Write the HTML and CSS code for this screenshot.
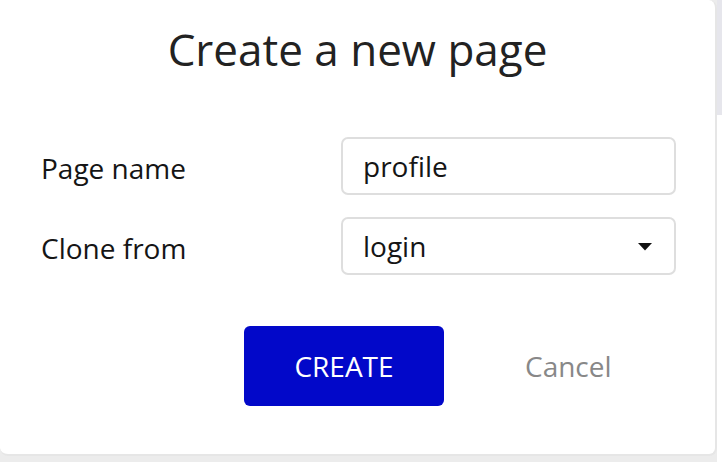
FILE: index.html
```html
<!DOCTYPE html>
<html>
<head>
<meta charset="utf-8">
<link rel="stylesheet" href="styles.css">
</head>
<body>
<div class="page">
  <div class="dialog">
    <h1 class="title">Create a new page</h1>
    <div class="form">
      <label class="label">Page name</label>
      <div class="field">profile</div>
      <label class="label">Clone from</label>
      <div class="field select">
        <span>login</span>
        <svg class="caret" width="14" height="8" viewBox="0 0 14 8"><path d="M0 0 H14 L7 7.5 Z" fill="#111"/></svg>
      </div>
    </div>
    <div class="actions">
      <button class="btn-create">CREATE</button>
      <button class="btn-cancel">Cancel</button>
    </div>
  </div>
  <div class="scrollbar"><div class="thumb"></div></div>
</div>
</body>
</html>
```

FILE: styles.css
```css
html, body {
  margin: 0;
  padding: 0;
}
body {
  width: 722px;
  height: 462px;
  background: #ececec;
  font-family: "Open Sans", "Noto Sans", sans-serif;
  overflow: hidden;
}
.page {
  display: flex;
  height: 456px;
}
.dialog {
  width: 715px;
  height: 454px;
  background: #fff;
  border-right: 2px solid #e6e6e6;
  border-bottom: 2px solid #e6e6e6;
  border-radius: 0 8px 8px 8px;
  display: flex;
  flex-direction: column;
}
.title {
  margin: 20px 0 0;
  font-size: 44px;
  font-weight: 400;
  line-height: 58px;
  color: #222;
  text-align: center;
}
.form {
  margin-top: 59px;
  display: grid;
  grid-template-columns: 300px 335px;
  row-gap: 22px;
  padding-left: 41px;
  align-items: center;
}
.label {
  font-size: 28px;
  color: #151515;
  line-height: 38px;
  margin-top: 4px;
}
.field {
  box-sizing: border-box;
  height: 58px;
  border: 2px solid #dedede;
  border-radius: 7px;
  padding: 0 20px;
  font-size: 28px;
  color: #151515;
  display: flex;
  align-items: center;
}
.select {
  justify-content: space-between;
}
.caret {
  margin-right: 2px;
  margin-top: 2px;
}
.actions {
  margin-top: 51px;
  display: flex;
  align-items: center;
  padding-left: 244px;
}
.btn-create {
  width: 200px;
  height: 80px;
  border: none;
  border-radius: 6px;
  background: #0208c9;
  color: #fff;
  font-family: inherit;
  font-size: 28px;
  padding: 0;
}
.btn-cancel {
  margin-left: 81px;
  border: none;
  background: none;
  color: #888;
  font-family: inherit;
  font-size: 28px;
  padding: 0;
}
.scrollbar {
  width: 5px;
  height: 462px;
  background: #fff;
}
.thumb {
  height: 115px;
  background: #e6e6ec;
}
```
